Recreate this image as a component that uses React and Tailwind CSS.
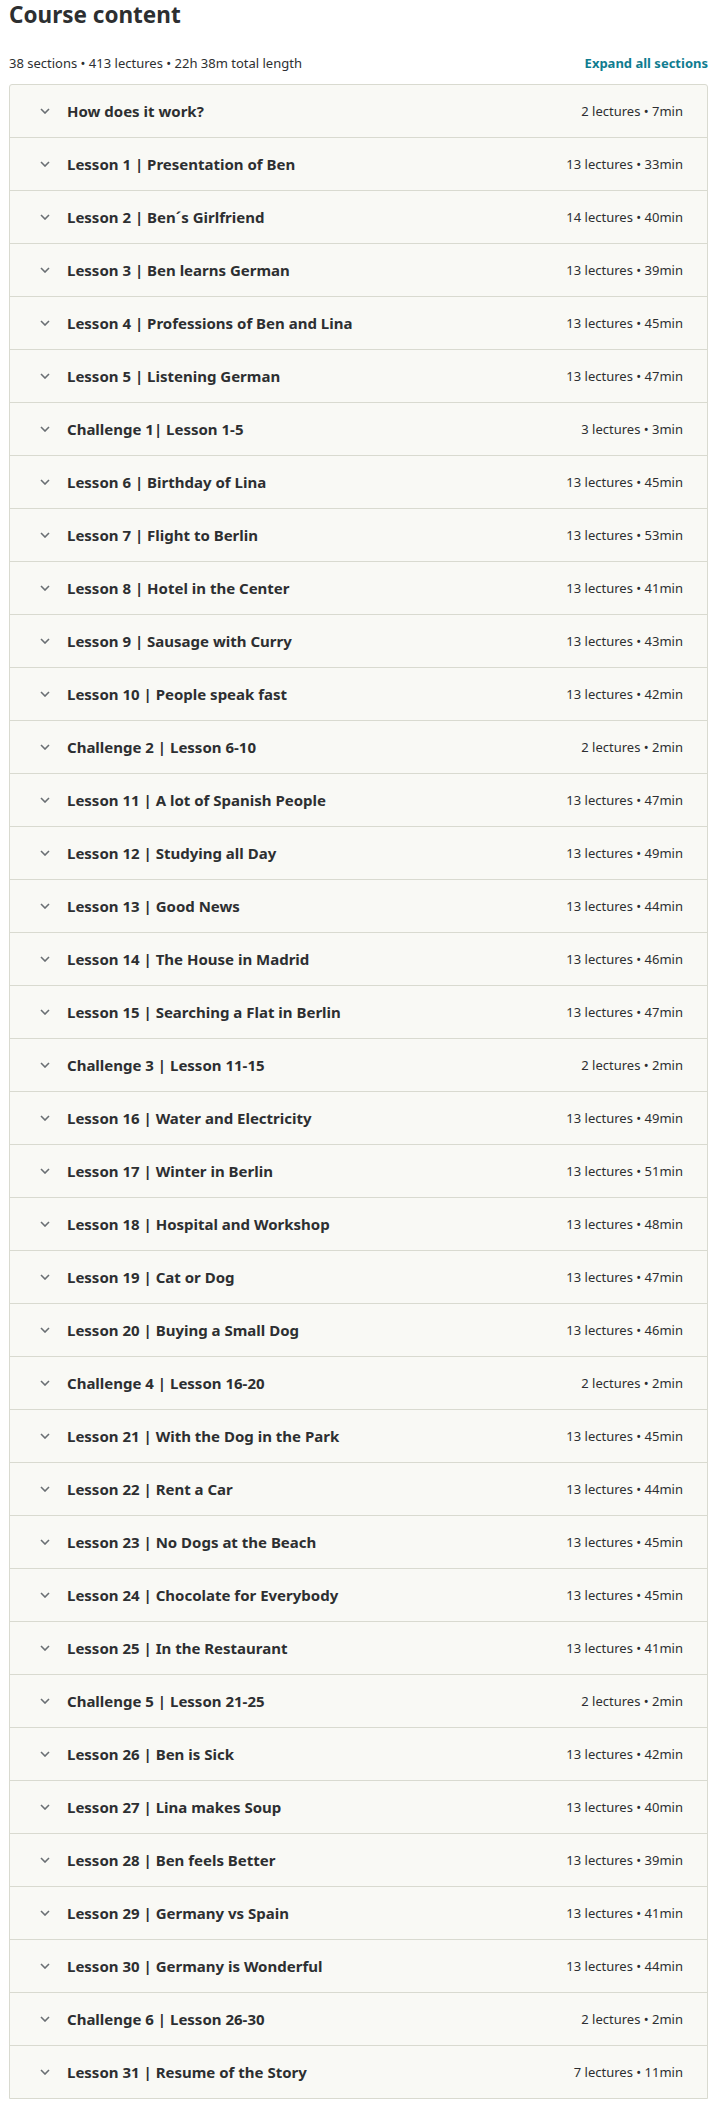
import React from "react";

const rows = [
  ["How does it work?", "2 lectures • 7min"],
  ["Lesson 1 | Presentation of Ben", "13 lectures • 33min"],
  ["Lesson 2 | Ben´s Girlfriend", "14 lectures • 40min"],
  ["Lesson 3 | Ben learns German", "13 lectures • 39min"],
  ["Lesson 4 | Professions of Ben and Lina", "13 lectures • 45min"],
  ["Lesson 5 | Listening German", "13 lectures • 47min"],
  ["Challenge 1| Lesson 1-5", "3 lectures • 3min"],
  ["Lesson 6 | Birthday of Lina", "13 lectures • 45min"],
  ["Lesson 7 | Flight to Berlin", "13 lectures • 53min"],
  ["Lesson 8 | Hotel in the Center", "13 lectures • 41min"],
  ["Lesson 9 | Sausage with Curry", "13 lectures • 43min"],
  ["Lesson 10 | People speak fast", "13 lectures • 42min"],
  ["Challenge 2 | Lesson 6-10", "2 lectures • 2min"],
  ["Lesson 11 | A lot of Spanish People", "13 lectures • 47min"],
  ["Lesson 12 | Studying all Day", "13 lectures • 49min"],
  ["Lesson 13 | Good News", "13 lectures • 44min"],
  ["Lesson 14 | The House in Madrid", "13 lectures • 46min"],
  ["Lesson 15 | Searching a Flat in Berlin", "13 lectures • 47min"],
  ["Challenge 3 | Lesson 11-15", "2 lectures • 2min"],
  ["Lesson 16 | Water and Electricity", "13 lectures • 49min"],
  ["Lesson 17 | Winter in Berlin", "13 lectures • 51min"],
  ["Lesson 18 | Hospital and Workshop", "13 lectures • 48min"],
  ["Lesson 19 | Cat or Dog", "13 lectures • 47min"],
  ["Lesson 20 | Buying a Small Dog", "13 lectures • 46min"],
  ["Challenge 4 | Lesson 16-20", "2 lectures • 2min"],
  ["Lesson 21 | With the Dog in the Park", "13 lectures • 45min"],
  ["Lesson 22 | Rent a Car", "13 lectures • 44min"],
  ["Lesson 23 | No Dogs at the Beach", "13 lectures • 45min"],
  ["Lesson 24 | Chocolate for Everybody", "13 lectures • 45min"],
  ["Lesson 25 | In the Restaurant", "13 lectures • 41min"],
  ["Challenge 5 | Lesson 21-25", "2 lectures • 2min"],
  ["Lesson 26 | Ben is Sick", "13 lectures • 42min"],
  ["Lesson 27 | Lina makes Soup", "13 lectures • 40min"],
  ["Lesson 28 | Ben feels Better", "13 lectures • 39min"],
  ["Lesson 29 | Germany vs Spain", "13 lectures • 41min"],
  ["Lesson 30 | Germany is Wonderful", "13 lectures • 44min"],
  ["Challenge 6 | Lesson 26-30", "2 lectures • 2min"],
  ["Lesson 31 | Resume of the Story", "7 lectures • 11min"],
];

function Chevron() {
  return (
    <svg width="10" height="6" viewBox="0 0 10 6" className="shrink-0">
      <path d="M1 1 L5 5 L9 1" fill="none" stroke="#6a6f73" strokeWidth="1.6" />
    </svg>
  );
}

export default function App() {
  return (
    <div
      className="w-[719px] bg-white text-[#2d2f31] pl-[9px] pr-[11px]"
      style={{ fontFamily: '"Noto Sans", "Open Sans", Arial, sans-serif' }}
    >
      <h2 className="text-[22.5px] font-bold leading-[30px] pt-0">Course content</h2>
      <div className="flex items-center justify-between mt-[24px] h-[18px]">
        <span className="text-[13px] leading-[18px]">38 sections • 413 lectures • 22h 38m total length</span>
        <span className="text-[13px] font-bold leading-[18px] text-[#0f7c90]">Expand all sections</span>
      </div>
      <div className="mt-[12px] border border-[#d9dad0] rounded-t-[3px] bg-[#f9f9f5]">
        {rows.map(([title, meta], i) => (
          <div
            key={i}
            className={
              "box-content flex items-center h-[52px] pl-[30px] pr-[24px] " +
              (i > 0 ? "border-t border-[#d9dad0] " : "")
            }
          >
            <Chevron />
            <span className="ml-[17px] text-[15px] font-bold leading-[20px] flex-1">{title}</span>
            <span className="text-[13px] leading-[18px]">{meta}</span>
          </div>
        ))}
      </div>
    </div>
  );
}
